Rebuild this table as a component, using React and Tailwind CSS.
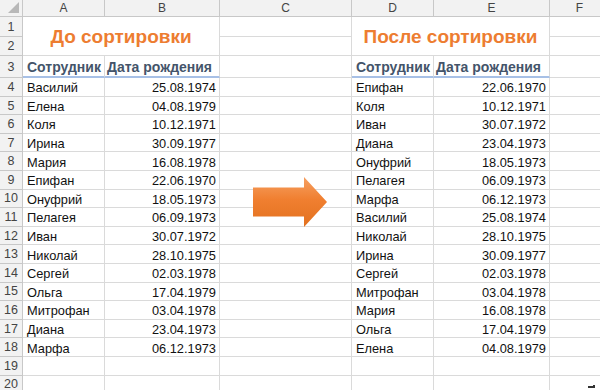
import React from 'react';

const before = [
  ['Василий', '25.08.1974'],
  ['Елена', '04.08.1979'],
  ['Коля', '10.12.1971'],
  ['Ирина', '30.09.1977'],
  ['Мария', '16.08.1978'],
  ['Епифан', '22.06.1970'],
  ['Онуфрий', '18.05.1973'],
  ['Пелагея', '06.09.1973'],
  ['Иван', '30.07.1972'],
  ['Николай', '28.10.1975'],
  ['Сергей', '02.03.1978'],
  ['Ольга', '17.04.1979'],
  ['Митрофан', '03.04.1978'],
  ['Диана', '23.04.1973'],
  ['Марфа', '06.12.1973']
];

const after = [
  ['Епифан', '22.06.1970'],
  ['Коля', '10.12.1971'],
  ['Иван', '30.07.1972'],
  ['Диана', '23.04.1973'],
  ['Онуфрий', '18.05.1973'],
  ['Пелагея', '06.09.1973'],
  ['Марфа', '06.12.1973'],
  ['Василий', '25.08.1974'],
  ['Николай', '28.10.1975'],
  ['Ирина', '30.09.1977'],
  ['Сергей', '02.03.1978'],
  ['Митрофан', '03.04.1978'],
  ['Мария', '16.08.1978'],
  ['Ольга', '17.04.1979'],
  ['Елена', '04.08.1979']
];

const cols = ['A', 'B', 'C', 'D', 'E', 'F'];

const cell = 'border-r border-b border-[#dadada] flex items-center overflow-visible whitespace-nowrap';
const rowHead =
  'border-r border-b border-[#c8c8c8] bg-[#f2f2f2] flex items-center justify-center pt-[1px] text-[12.5px] text-[#444]';
const head3 = '!border-b-2 !border-b-[#a7c0e6] pt-[3px] text-[14px] font-bold text-[#44546a]';
const title =
  'col-span-2 row-span-2 border-r border-b border-[#dadada] flex items-center justify-center pt-[3px] text-[19px] font-bold text-[#ed7d31]';

const Cell = ({ children, className = '' }) => <div className={`${cell} ${className}`}>{children}</div>;

const Arrow = () => (
  <svg className="absolute left-[252px] top-[176px]" width="76" height="52" viewBox="0 0 76 52">
    <defs>
      <linearGradient id="arr" x1="0" y1="0" x2="0" y2="1">
        <stop offset="0" stopColor="#f6a062" />
        <stop offset="0.45" stopColor="#f07f30" />
        <stop offset="1" stopColor="#e2711f" />
      </linearGradient>
    </defs>
    <path d="M1 11.5 H52 V1 L75 26 L52 51 V40.5 H1 Z" fill="url(#arr)" />
  </svg>
);

export default function App() {
  const dataRows = before.map((b, i) => ({ n: i + 4, b, a: after[i] }));

  return (
    <div
      className="relative w-[600px] h-[390px] overflow-hidden bg-white text-[12.8px] text-[#111]"
      style={{ fontFamily: '"Liberation Sans", Arial, sans-serif' }}
    >
      <div className="grid grid-cols-[23px_82px_115px_132px_82px_116px_60px] grid-rows-[17px_20px_19px_22px_repeat(17,18.6px)]">
        {/* header row */}
        <div className="border-r border-b border-[#c8c8c8] bg-[#f2f2f2] relative">
          <svg className="absolute right-[3px] bottom-[3px]" width="11" height="11" viewBox="0 0 11 11">
            <path d="M11 0 V11 H0 Z" fill="#b8b8b8" />
          </svg>
        </div>
        {cols.map((c) => (
          <div
            key={c}
            className="border-r border-b border-[#c8c8c8] bg-[#f2f2f2] flex items-center justify-center text-[12px] text-[#444]"
          >
            {c}
          </div>
        ))}

        {/* rows 1-2, merged titles */}
        <div className={rowHead}>1</div>
        <div className={title}>До сортировки</div>
        <Cell />
        <div className={title}>После сортировки</div>
        <Cell />
        <div className={rowHead}>2</div>
        <Cell />
        <Cell />

        {/* row 3 */}
        <div className={rowHead}>3</div>
        <Cell className={`${head3} pl-[4px]`}>Сотрудник</Cell>
        <Cell className={`${head3} pl-[2px]`}>Дата рождения</Cell>
        <Cell />
        <Cell className={`${head3} pl-[4px]`}>Сотрудник</Cell>
        <Cell className={`${head3} pl-[2px]`}>Дата рождения</Cell>
        <Cell />

        {dataRows.map((r) => (
          <React.Fragment key={r.n}>
            <div className={rowHead}>{r.n}</div>
            <Cell className="pl-[4px] pt-[2px]">{r.b[0]}</Cell>
            <Cell className="justify-end pr-[3px] pt-[2px]">{r.b[1]}</Cell>
            <Cell />
            <Cell className="pl-[4px] pt-[2px]">{r.a[0]}</Cell>
            <Cell className="justify-end pr-[3px] pt-[2px]">{r.a[1]}</Cell>
            <Cell />
          </React.Fragment>
        ))}

        {[19, 20].map((n) => (
          <React.Fragment key={n}>
            <div className={rowHead}>{n}</div>
            <Cell />
            <Cell />
            <Cell />
            <Cell />
            <Cell />
            <Cell />
          </React.Fragment>
        ))}
      </div>

      <Arrow />
      <div className="absolute left-[588px] top-[385px] w-[7px] h-[3px] border-r-2 border-b-2 border-[#333]" />
    </div>
  );
}
